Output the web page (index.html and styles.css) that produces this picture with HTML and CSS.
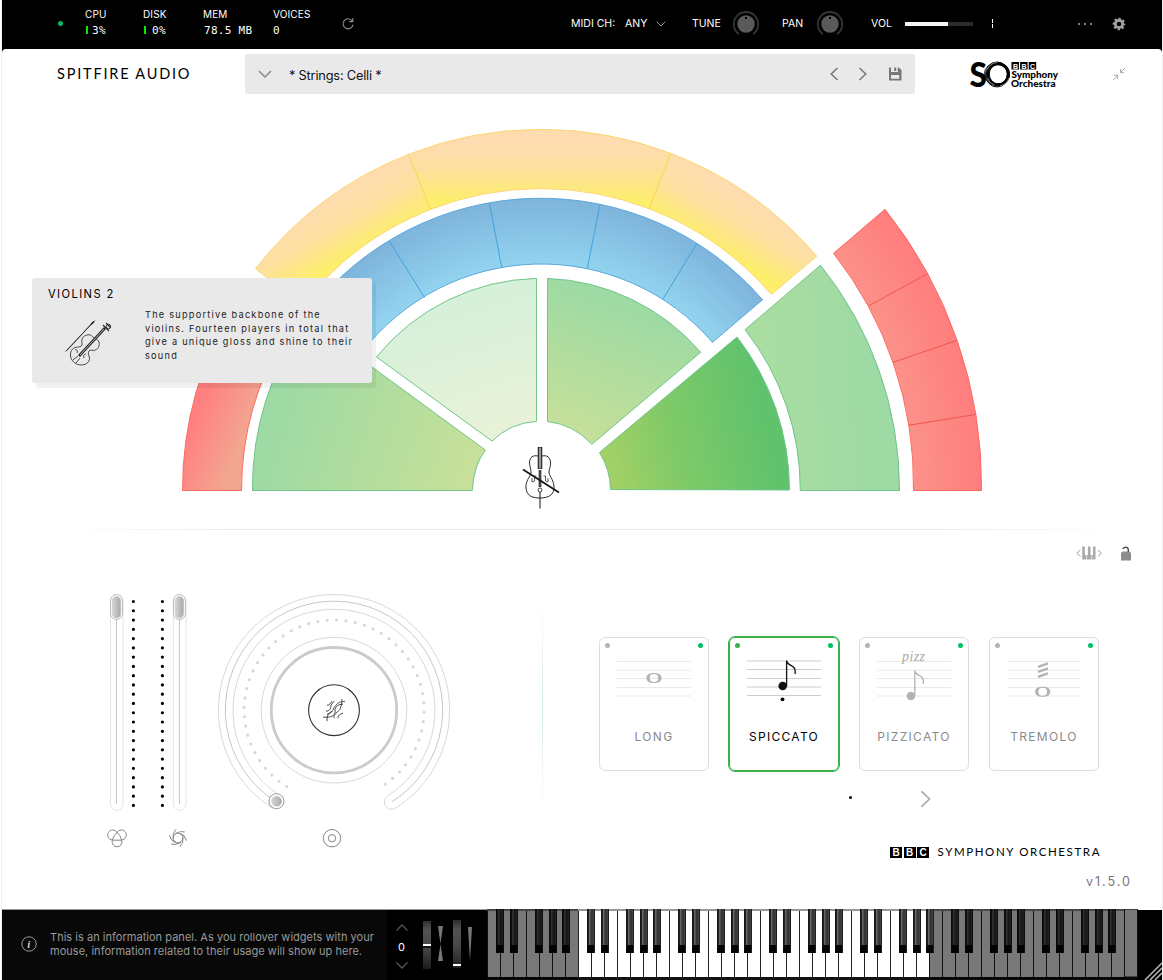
FILE: index.html
```html
<!DOCTYPE html>
<html lang="en">
<head>
<meta charset="utf-8">
<title>BBC Symphony Orchestra</title>
<link rel="stylesheet" href="styles.css">
</head>
<body>
<div class="app">
  <header class="topbar">
    <span class="status"></span>
    <div class="stat cpu"><span>CPU</span><b class="mono"><i class="meter"></i>3%</b></div>
    <div class="stat disk"><span>DISK</span><b class="mono"><i class="meter"></i>0%</b></div>
    <div class="stat mem"><span>MEM</span><b class="mono">78.5 MB</b></div>
    <div class="stat voices"><span>VOICES</span><b class="mono">0</b></div>
    <svg class="reload" width="14" height="14" viewBox="0 0 14 14"><path d="M11.2 4A5 5 0 1 0 12 7.600M11.800 1v3.600H8.200" fill="none" stroke="#8c8c8c" stroke-width="1.100"/></svg>
    <span class="lbl midi">MIDI CH:</span>
    <span class="lbl any">ANY</span>
    <svg width="10" height="6" viewBox="0 0 10 6"><path d="M.7.7 5 5 9.300.7" fill="none" stroke="#999"/></svg>
    <span class="lbl tune">TUNE</span>
    <svg class="knob" width="28" height="28" viewBox="-14 -14 28 28"><g id="knob"><path d="M-7 10.200A12.200 12.200 0 1 1 7 10.200" fill="none" stroke="#333" stroke-width="1.900"/><circle r="8.700" fill="#5a5a5a"/><rect x="-1" y="-7" width="2" height="2" fill="#000"/></g></svg>
    <span class="lbl pan">PAN</span>
    <svg class="knob" width="28" height="28" viewBox="-14 -14 28 28"><use href="#knob"/></svg>
    <span class="lbl vol">VOL</span>
    <span class="volbar"><i></i></span>
    <span class="tick"></span>
    <svg class="more" width="16" height="4" viewBox="-1 0 16 4"><g fill="#aaa"><circle cx="2" cy="2" r="1"/><circle cx="8" cy="2" r="1"/><circle cx="14" cy="2" r="1"/></g></svg>
    <svg class="more" width="14" height="14" viewBox="-7 -7 14 14"><circle r="3.700" fill="none" stroke="#a3a3a3" stroke-width="2.800"/><circle r="5.500" fill="none" stroke="#a3a3a3" stroke-width="1.700" stroke-dasharray="2.3 2.02" stroke-dashoffset="1.150"/></svg>
  </header>

  <main class="body">
  <div class="head">
    <span class="brand">SPITFIRE AUDIO</span>
    <div class="preset">
      <svg width="14" height="9" viewBox="0 0 14 9"><path d="M1 1l6 6 6-6" fill="none" stroke="#888" stroke-width="1.500"/></svg>
      <span class="pname">* Strings: Celli *</span>
      <svg width="10" height="14" viewBox="0 0 10 14"><path d="M8.500 1 2.200 7l6.300 6" fill="none" stroke="#777" stroke-width="1.500"/></svg>
      <svg class="next" width="10" height="14" viewBox="0 0 10 14"><path d="M1.500 1l6.300 6-6.300 6" fill="none" stroke="#777" stroke-width="1.500"/></svg>
      <svg width="14" height="14" viewBox="0 0 14 14"><path fill-rule="evenodd" d="M1 .5h9.700L13.500 3v10.500H1zM3 .5V5h6.800V.5zM3 8v3.800h8.200V8z" fill="#777"/><path d="M6.200.5h2V4h-2z" fill="#777"/></svg>
    </div>
    <svg class="sologo" width="94" height="48" viewBox="966 50 94 48">
      <text x="969.500" y="87" class="big-s" textLength="17.500" lengthAdjust="spacingAndGlyphs">S</text>
      <g fill="none" stroke="#000"><ellipse cx="998" cy="74.300" rx="10.500" ry="10.500" stroke-width="3"/><ellipse cx="998.300" cy="74" rx="9" ry="10" stroke-width="1"/><ellipse cx="997" cy="74.500" rx="11.500" ry="12.500" stroke-width="1"/><ellipse cx="996.800" cy="74" rx="12.500" ry="11.500" stroke-width=".8"/></g>
      <g stroke="#fff" stroke-width=".5" fill="none"><path d="M987 70a12 12 0 0 1 10-7.500M1009 78a12 12 0 0 1-9 8M987.500 78a11 11 0 0 0 7 7"/></g>
      <path d="M1011.500 62h7.500v7.500h-7.500zM1020.100 62h7.500v7.500h-7.500zM1028.700 62h7.500v7.500h-7.500z"/>
      <g class="bbc-s"><text x="1013" y="68.500">B</text><text x="1021.600" y="68.500">B</text><text x="1030" y="68.500">C</text></g>
      <text class="so-t" x="1011.500" y="78" textLength="46.500" lengthAdjust="spacingAndGlyphs">Symphony</text>
      <text class="so-t" x="1011" y="87" textLength="44.500" lengthAdjust="spacingAndGlyphs">Orchestra</text>
    </svg>
    <svg class="shrink" width="14" height="14" viewBox="0 0 14 14"><path d="M13 1 8.500 5.500M8.500 2v3.700H12M1 13l4.500-4.500M2 8.300h3.600V12" fill="none" stroke="#aaa" stroke-width="1"/></svg>
  </div>

  <section class="stage">
    <svg width="1160" height="425" viewBox="2 100 1160 425">
      <defs>
        <linearGradient id="yel" gradientUnits="userSpaceOnUse" x1="0" y1="128" x2="0" y2="209"><stop offset=".2" stop-color="#fedcaf"/><stop offset=".5" stop-color="#fde09e"/><stop offset=".9" stop-color="#fdee6c"/></linearGradient>
        <linearGradient id="yell" gradientUnits="userSpaceOnUse" x1="325" y1="200" x2="363" y2="266"><stop offset=".05" stop-color="#fedcaf"/><stop offset=".4" stop-color="#fde09e"/><stop offset=".8" stop-color="#fdee6c"/></linearGradient>
        <linearGradient id="yelr" gradientUnits="userSpaceOnUse" x1="755" y1="200" x2="717" y2="266"><stop offset=".05" stop-color="#fedcaf"/><stop offset=".4" stop-color="#fde09e"/><stop offset=".8" stop-color="#fdee6c"/></linearGradient>
        <radialGradient id="blu" gradientUnits="userSpaceOnUse" cx="541" cy="491" r="293"><stop offset=".77" stop-color="#93d4f0"/><stop offset="1" stop-color="#7eb4db"/></radialGradient>
        <radialGradient id="red" gradientUnits="userSpaceOnUse" cx="541" cy="491" r="443"><stop offset=".84" stop-color="#fb928a"/><stop offset="1" stop-color="#ff7d7d"/></radialGradient>
        <linearGradient id="redl" gradientUnits="userSpaceOnUse" x1="188" y1="420" x2="242" y2="442"><stop offset=".1" stop-color="#ff8080"/><stop offset="1" stop-color="#f2a691"/></linearGradient>
        <linearGradient id="g1" x1="0" y1=".4" x2="1" y2=".65"><stop offset=".15" stop-color="#9edaa3"/><stop offset="1" stop-color="#c7e099"/></linearGradient>
        <linearGradient id="g2" x1=".4" y1="0" x2=".7" y2="1"><stop offset=".2" stop-color="#d7f0da"/><stop offset="1" stop-color="#e9f2d8"/></linearGradient>
        <linearGradient id="g3" x1=".6" y1=".1" x2=".3" y2="1"><stop offset=".1" stop-color="#9edaa3"/><stop offset="1" stop-color="#c7e099"/></linearGradient>
        <linearGradient id="g4" x1="0" y1=".8" x2="1" y2=".6"><stop offset="0" stop-color="#a6d164"/><stop offset=".4" stop-color="#7fca68"/><stop offset=".9" stop-color="#5fc26c"/></linearGradient>
        <linearGradient id="g5" x1="0" y1=".5" x2="1" y2=".4"><stop offset=".1" stop-color="#aadda1"/><stop offset=".8" stop-color="#9edaa4"/></linearGradient>
      </defs>
      <g stroke="#fbd873">
        <path fill="url(#yell)" d="M255.500 268.700A362.500 362.500 0 0 1 408.700 154.300L430.300 209.500A302 302 0 0 0 302.600 305Z"/>
        <path fill="url(#yelr)" d="M670.600 153.300A362.500 362.500 0 0 1 816.800 256.200L771.300 294.500A302 302 0 0 0 649 208.700Z"/>
        <path fill="url(#yel)" d="M408.700 154.300A362.500 362.500 0 0 1 670.600 153.300L649 208.700A302 302 0 0 0 430.300 209.500Z"/>
      </g>
      <path fill="none" stroke="#ffd95c" d="M408.700 154.300 430.300 209.500M670.600 153.300 649 208.700"/>
      <path fill="url(#blu)" stroke="#5aa8db" d="M309 312A293 293 0 0 1 762.500 299.700L712.500 342.300A226.500 226.500 0 0 0 362 352Z"/>
      <path fill="none" stroke="#40a4dc" d="M389.500 241.500 424.500 297.500M489.500 203.500 501.800 268M599.900 204.700 587.300 268.500M696.700 243.700 663 299"/>
      <g stroke="#6fc58a">
        <path fill="url(#g1)" d="M252.500 490.500A289.500 289.500 0 0 1 306.500 319L485.300 450Q473.500 466 472.300 490.500Z"/>
        <path fill="url(#g2)" d="M376.500 357A213 213 0 0 1 536.500 278.400V421.300A70 70 0 0 0 492 441Z"/>
        <path fill="url(#g3)" d="M547.500 278.400A213 213 0 0 1 700.700 352.300L591.800 444.300A70 70 0 0 0 547.500 421.500Z"/>
        <path fill="url(#g4)" d="M737 337A249 249 0 0 1 789.500 490L610.500 489.500A70 70 0 0 0 599.500 452.500Z"/>
        <path fill="url(#g5)" d="M820.500 265.200A359 359 0 0 1 899.500 490.500H800.300A259 259 0 0 0 745 329.700Z"/>
      </g>
      <g stroke="#fc6a62">
        <path fill="url(#redl)" d="M182.500 490.500A359 359 0 0 1 235 303L286 334A299 299 0 0 0 241.500 490.500Z"/>
        <path fill="url(#red)" d="M885 209.300A443 443 0 0 1 981.500 490.500H913.500A374 374 0 0 0 833.500 253.300Z"/>
      </g>
      <path fill="none" stroke="#f2564a" d="M868.500 306 927.500 273.700M893.300 362.300 956.500 340.500M908.700 425.300 975.500 414.500"/>
      <g fill="none" stroke="#111">
        <path d="M538 456c-5-1-8 1-8.500 6 0 5 2 8 1.500 11-1 4-4 6-5 12-.5 8 3 13 13.500 13s15-4 14.500-12c-1-7-4-9-5-13-.5-3 2-6 1.500-11-.5-5-3.500-7-8.500-6" stroke-width=".9"/>
        <path d="M532 478v4l2.500-1v-5h2M548 478v4l-2.500-1v-5h-2" stroke-width=".7"/>
        <path d="M540 447v22" stroke-width="4.500"/><path d="M540 447.500v21" stroke="#999" stroke-width="2.500"/>
        <path d="M540 470v17" stroke-width="2.600"/><path d="M540 470v17" stroke-width="1" stroke="#777"/><path d="M540 492v16.500" stroke-width="1"/>
        <path d="M523 469.500l36 23" stroke-width="1.600"/><circle cx="540" cy="490" r="2" fill="#fff" stroke-width=".8"/>
      </g>
    </svg>
    <div class="tooltip">
      <h2>VIOLINS 2</h2>
      <svg width="52" height="50" viewBox="62 316 52 50" fill="none" stroke="#222">
        <path d="M65.500 351.500 95 320.500M67 350.500 93 322" stroke-width=".8"/><path d="M91 324.500l3-3" stroke-width="1.600"/>
        <path d="M82 343c-1-4 1-7 5-8 3-1 5 1 7 3M94 338c4 1 6 4 5 8-1 4-5 5-9 4-2 1-2 4-1 6 2 5-2 9-8 9-5 0-10-4-10.500-9-.5-6 3-9 8-9 2 0 4-1 3.500-4" stroke-width=".8"/>
        <path d="M79 356l26-28" stroke-width="2.600"/><path d="M80 355l24-26" stroke="#bbb" stroke-width="1"/>
        <path d="M103 325l6 6M106 323l4.500 4.500" stroke-width="1.100"/><circle cx="108.500" cy="326.500" r="2.200" stroke-width=".9"/>
        <path d="M75 350c2-1 3 1 2 3M86 354c-2 0-3 2-2 4M73 360l5-4M76 363l4-5" stroke-width=".8"/>
      </svg>
      <p>The supportive backbone of the<br>violins. Fourteen players in total that<br>give a unique gloss and shine to their<br>sound</p>
    </div>
  </section>

  <div class="rule"></div>

  <section class="controls">
    <div class="left">
      <svg width="362" height="280" viewBox="98 580 362 280">
        <defs><linearGradient id="hd"><stop offset="0" stop-color="#d6d6d6"/><stop offset="1" stop-color="#a9a9a9"/></linearGradient>
        <g id="slider" fill="#fff"><rect x="110.500" y="594.700" width="12.600" height="215.600" rx="6.300" stroke="#e6e6e6"/><path d="M116.500 619v185" stroke="#c8c8c8"/><rect x="110.500" y="594.500" width="12" height="25" rx="6" stroke="#bbb"/><rect x="112.300" y="596.500" width="8.400" height="21.500" rx="4.200" fill="url(#hd)" stroke="#bbb" stroke-width=".5"/></g></defs>
        <use href="#slider"/><use href="#slider" x="62.900"/>
        <g stroke="#000" stroke-width="3.200" stroke-linecap="round"><path d="M133.400 601.500V806" stroke-dasharray="0 9.270"/><path d="M162.400 601.500V806" stroke-dasharray="0 9.270"/></g>
        <g transform="translate(334 710.200)" fill="none">
          <path d="M-61.700 97.900A115.700 115.700 0 1 1 61.700 97.900A7.350 7.350 0 0 1 53.800 85.500A101 101 0 1 0 -53.800 85.500A7.350 7.350 0 0 0 -61.700 97.900Z" stroke="#d9d9d9"/>
          <path d="M-57.800 91.700A108.700 108.700 0 1 1 57.800 91.700" stroke="#c6c6c6"/>
          <path d="M-47.300 76.300A90 90 0 1 1 50.900 74.100" pathLength="49.050" stroke-dasharray="0 1" stroke="#d8d8d8" stroke-width="3.200" stroke-linecap="round"/>
          <circle r="72.800" stroke="#d9d9d9"/><circle r="62.700" stroke="#cbcbcb" stroke-width="2.800"/>
          <circle r="25.400" stroke="#333" stroke-width="1.100"/>
          <g stroke="#333" stroke-width=".9"><path d="M-8 1c3 0 5-2 5-6l3-4M-7 4c7-1 5-6 10-10 3-3 4-2 8-3M-11 7h3c7 0 10-3 9-7 0-4 4-6 8-6M0 8c-1-4 4-6 6-9 1-3 2-5 2-10M-7 11c0-7 2-8 5-10M4 8c0-3 2-4 5-5M-7-5c2 0 3-1 5-4"/></g>
          <circle cx="-57.500" cy="91" r="7.500" fill="#fff" stroke="#999"/><circle cx="-57.500" cy="91" r="5.300" fill="url(#hd)"/>
        </g>
        <g fill="none" stroke="#777" stroke-width=".9">
          <path d="M112.400 840A5 5 0 1 1 117 832.500A5 5 0 1 1 121.600 840"/><path d="M112.300 840.500A4.900 4.900 0 1 0 121.700 840.500"/><path d="M112.400 840.200h9.200Q120.500 835 117 832.500 113.500 835 112.400 840.200Z"/>
          <g transform="translate(178 838)"><circle r="4.900"/><path id="bl" d="M-4.800.5Q-6-4.500-1.900-8.700"/><use href="#bl" transform="rotate(60)"/><use href="#bl" transform="rotate(120)"/><use href="#bl" transform="rotate(180)"/><use href="#bl" transform="rotate(240)"/><use href="#bl" transform="rotate(300)"/></g>
          <circle cx="332" cy="838.200" r="8.700"/><circle cx="332" cy="838.200" r="3.700"/>
        </g>
      </svg>
    </div>
    <div class="vrule"></div>
    <div class="right">
      <div class="tools">
        <svg width="26" height="14" viewBox="0 0 26 14"><path d="M4.300 4 1 7.200l3.300 3.300M22 4l3.300 3.200L22 10.500" fill="none" stroke="#999"/><path d="M6.200.5h2.600V9h1.600v4.500H6.200zM11 9h.9V.5h2.600V9h1v4.500H11zM16.200 9h.8V.5h2.500v13h-3.300z" fill="#aaa"/></svg>
        <svg width="12" height="15" viewBox="0 0 12 15"><path d="M1 7l1.500-1.500h7L11 7v7.500H1z" fill="#8d8d8d"/><path d="M3 3.200C3.500.8 8.300.4 8.300 3.500V6" fill="none" stroke="#555" stroke-width="1.500"/></svg>
      </div>
      <div class="cards">
        <article class="card"><i class="l"></i><i class="r"></i>
          <svg width="76" height="64" viewBox="616 646 76 64"><g id="staff" stroke="#e9e9e9"><path d="M617 661.500h74M617 670.200h74M617 678.500h74M617 687.500h74M617 696h74"/></g><path id="whole" fill-rule="evenodd" d="M654 673c5 0 7.500 1.800 7.500 5s-2.500 5-7.500 5-7.500-1.800-7.500-5 2.500-5 7.500-5zM654 674c-3.200 0-4.300 1.200-4.300 4s1.100 4 4.300 4 4.300-1.200 4.300-4-1.100-4-4.300-4z" fill="#b3b3b3"/></svg>
          <span>LONG</span></article>
        <article class="card on"><i class="l"></i><i class="r"></i>
          <svg width="76" height="64" viewBox="616 646 76 64"><path stroke="#cdcdcd" d="M617 661h74M617 669.500h74M617 678.500h74M617 687h74M617 695.500h74"/><g id="note"><circle cx="652.700" cy="686" r="4.300" fill="currentColor"/><path d="M656.600 660.500V686M656.600 661c1 5 8.500 4 8.500 9.500v3.500" fill="none" stroke="currentColor" stroke-width="1.300"/></g><circle cx="652.500" cy="699.300" r="1.900"/></svg>
          <span>SPICCATO</span></article>
        <article class="card"><i class="l"></i><i class="r"></i>
          <svg class="dim" width="76" height="64" viewBox="616 646 76 64"><use href="#staff"/><use href="#note" x="-1.800" y="10"/><text x="642" y="661" class="pizz" textLength="23">pizz</text></svg>
          <span>PIZZICATO</span></article>
        <article class="card"><i class="l"></i><i class="r"></i>
          <svg class="dim" width="76" height="64" viewBox="616 646 76 64"><use href="#staff"/><use href="#whole" x="-1.300" y="13.700"/><path d="M648 666.800l10-3.500M648 671.800l10-3.500M648 676.800l10-3.500" stroke="#b3b3b3" stroke-width="2.300"/></svg>
          <span>TREMOLO</span></article>
      </div>
      <div class="pager"><i></i><svg width="12" height="18" viewBox="0 0 12 18"><path d="M1.500 1.300 9.500 9l-8 7.700" fill="none" stroke="#aaa" stroke-width="1.700"/></svg></div>
      <div class="bbc"><b>B</b><b>B</b><b>C</b><span>SYMPHONY ORCHESTRA</span></div>
      <div class="ver">v1.5.0</div>
    </div>
  </section>
  </main>

  <footer class="foot">
    <div class="info">
      <svg width="16" height="16" viewBox="0 0 16 16"><circle cx="8" cy="8" r="7.200" fill="none" stroke="#aaa" stroke-width=".9"/><text x="6.200" y="12" class="ii">i</text></svg>
      <p>This is an information panel. As you rollover widgets with your<br>mouse, information related to their usage will show up here.</p>
    </div>
    <div class="oct">
      <svg width="12" height="7" viewBox="0 0 12 7"><path d="M.5 6.500 6 1l5.500 5.500" fill="none" stroke="#555" stroke-width="1.300"/></svg>
      <span>0</span>
      <svg width="12" height="7" viewBox="0 0 12 7"><path d="M.5.500 6 6 11.500.500" fill="none" stroke="#555" stroke-width="1.300"/></svg>
    </div>
    <svg width="64" height="70" viewBox="415 910 64 70">
      <defs><linearGradient id="wh" x2="0" y2="1"><stop offset="0" stop-color="#2c2c2c"/><stop offset=".2" stop-color="#525252"/><stop offset=".55" stop-color="#474747"/><stop offset="1" stop-color="#1c1c1c"/></linearGradient></defs>
      <path fill="url(#wh)" d="M423 921h8v48h-8zM453 920h8v48h-8z"/>
      <path fill="#fff" d="M423 944h8v2h-8zM453 964h8v2h-8z"/><path d="M423 946h8v2h-8z" fill="#111"/>
      <path fill="#777" d="M438 926h5l-2.500 18zM438 961h5l-2.500-17zM468 927h4l-2 34z"/>
    </svg>
    <svg class="keys" width="675" height="71" viewBox="487 909 675 71">
      <defs>
        <linearGradient id="bkg"><stop offset="0" stop-color="#111"/><stop offset=".2" stop-color="#222"/><stop offset=".3" stop-color="#666"/><stop offset=".5" stop-color="#444"/><stop offset=".65" stop-color="#222"/><stop offset=".75" stop-color="#555"/><stop offset="1" stop-color="#0a0a0a"/></linearGradient>
        <g id="bk"><path d="M0 0h8v44H0z" fill="url(#bkg)"/><path d="M1 36h6v8H0v-3z" fill="#050505"/></g>
        <g id="octave"><path d="M0 0h91v68H0z" fill="#fff"/><path d="M.5 0v68M13.500 0v68M26.500 0v68M39.500 0v68M52.500 0v68M65.500 0v68M78.500 0v68" stroke="#222"/><path d="M0 .5h91M0 1.500h91" stroke="#999"/><use href="#bk" x="9"/><use href="#bk" x="23"/><use href="#bk" x="48"/><use href="#bk" x="62"/><use href="#bk" x="75"/></g>
      </defs>
      <path d="M487 909h651v71h-651z" fill="#111"/>
      <g transform="translate(487 909)">
        <use href="#octave"/><use href="#octave" x="91"/><use href="#octave" x="182"/><use href="#octave" x="273"/><use href="#octave" x="364"/><use href="#octave" x="455"/><use href="#octave" x="546"/>
        <path d="M637.500 0h13v68h-13z" fill="#fff" stroke="#222"/>
        <path d="M0 0h91v71H0zM442 0h209v71H442z" fill="#000" fill-opacity=".53"/>
        <use href="#bk" x="439"/>
      </g>
      <path d="M1138 909h24v1h-24z" fill="#fff"/>
      <path d="M1145 980l17-17M1150 980l12-12M1155 980l7-7" stroke="#bbb" stroke-width="1.500"/>
    </svg>
  </footer>
</div>
</body>
</html>
```
FILE: styles.css
```css
* { box-sizing: border-box; }
body { margin: 0; background: #fff; font-family: Inter, "Liberation Sans", sans-serif; width: 1163px; height: 980px; overflow: hidden; }
svg { display: block; }
p, h2 { margin: 0; font-weight: 400; }
.app { width: 1160px; height: 980px; margin-left: 2px; position: relative; display: flex; flex-direction: column; background: linear-gradient(#000 60px, #fff 60px); box-shadow: 0 0 0 1px #f0f0f0; }

.topbar { height: 49px; display: grid; align-items: center; color: #fff; flex: none; padding-bottom: 2px;
  grid-template-columns: 83px 58px 60px 70px 68px 230px 54px 31px 36px 40px 50px 34px 55px 34px 86px 85px 36px 1fr; }
.status { width: 5px; height: 5px; border-radius: 50%; background: #00b866; margin-left: 56px; }
.stat { display: flex; flex-direction: column; font-size: 10px; line-height: 16px; letter-spacing: .15px; padding-bottom: 1px; }
.stat > span { margin-top: -1px; }
.mono { font: 11px/16px "DejaVu Sans Mono", monospace; letter-spacing: .3px; white-space: pre; display: flex; align-items: center; margin-top: 1px; }
.mem .mono { padding-left: 1px; }
.meter { width: 2px; height: 8px; background: #00f000; margin: -2px 4px 0 1px; }
.disk .meter { margin-right: 6px; }
.lbl { font-size: 10.5px; line-height: 14px; white-space: nowrap; }
.any, .tune, .pan { padding-top: 1px; }
.volbar { width: 68px; height: 4px; background: #2a2c2e; }
.volbar i { display: block; width: 43px; height: 4px; background: #f2f5f7; }
.tick { width: 1px; height: 9px; background: linear-gradient(#fff 4px, #000 4px, #000 5px, #fff 5px); margin-left: 1px; }

.body { flex: none; height: 861px; background: #fff; border-radius: 4px 4px 0 0; border-bottom: 1px solid #999; }
.head { height: 51px; padding-bottom: 1px; display: grid; grid-template-columns: 243px 725px 142px 1fr; align-items: center; }
.brand { font: 14.5px/20px Lato, sans-serif; letter-spacing: 1.8px; padding-left: 55px; }
.preset { width: 670px; height: 40px; background: #e9e9e9; border-radius: 2px; display: grid; grid-template-columns: 30px 541px 29px 30px 1fr; align-items: center; padding-left: 13px; }
.pname { font-size: 12.8px; letter-spacing: -.2px; color: #111; padding: 2px 0 0 1px; }
.big-s { font: 900 35px Lato, sans-serif; }
.so-t { font: 900 9px Lato, sans-serif; }
.bbc-s { font: 700 7px "Liberation Sans", sans-serif; fill: #fff; }
.sologo { margin-left: -4px; }

.stage { height: 429px; position: relative; }
.tooltip { position: absolute; left: 30px; top: 178px; width: 340px; height: 105px; background: #e9e9e9; border-radius: 3px; box-shadow: 4px 5px 0 rgba(0,0,0,.06); display: grid; grid-template-columns: 81px 1fr; column-gap: 16px; grid-template-rows: 30px 1fr; padding-left: 16px; }
.tooltip h2 { grid-column: 1 / 3; font-size: 11.2px; line-height: 14px; letter-spacing: 1.4px; padding-top: 9px; }
.tooltip svg { margin: 8px 0 0 14px; }
.tooltip p { font-size: 9.2px; line-height: 13.7px; letter-spacing: 1.23px; color: #222; white-space: nowrap; }
.rule { height: 1px; background: linear-gradient(90deg, #fff 5%, #ebebeb 20%, #ebebeb 80%, #fff 97%); }

.controls { height: 378px; display: grid; grid-template-columns: 540px 1px 1fr; }
.left { padding: 50px 0 0 96px; }
.vrule { height: 222px; margin-top: 65px; background: linear-gradient(#fff, #d5e9ee 50%, #fff); }
.tools { display: flex; gap: 18px; padding: 16px 0 0 533px; height: 107px; }
.cards { display: flex; gap: 20px; padding-left: 56px; }
.card { width: 110px; height: 134px; border: 1px solid #ddd; border-radius: 6px; display: grid; grid-template-columns: 1fr 1fr; grid-template-rows: 72px 1fr; position: relative; color: #b3b3b3; }
.card i { width: 5px; height: 5px; border-radius: 50%; background: #00c060; position: absolute; top: 5px; right: 5px; }
.card i.l { left: 5px; background: #b3b3b3; }
.card svg { grid-column: 1 / 3; margin: 8px 0 0 16px; }
.card span { grid-column: 1 / 3; text-align: center; font-size: 12px; line-height: 16px; letter-spacing: 1.3px; color: #8a8a8a; padding-top: 19px; }
.card.on { outline: 1px solid #39b04c; border-color: #39b04c; color: #111; outline-offset: -.5px; }
.card.on i.l { background: #39b04c; }
.card.on span { color: #000; }
.pizz { font: italic 14px "Liberation Serif", serif; fill: #aaa; }
.pager { display: flex; align-items: center; gap: 68px; padding: 19px 0 0 306px; height: 37px; }
.pager i { width: 3px; height: 3px; border-radius: 50%; background: #000; margin-top: -4px; }
.bbc { display: flex; gap: 1.5px; padding-left: 347px; margin-top: 38px; height: 12px; align-items: center; }
.bbc b { width: 12px; height: 11px; background: #000; color: #fff; font: 700 10px/11px "Liberation Sans", sans-serif; text-align: center; }
.bbc span { font: 11.5px/12px Lato, sans-serif; letter-spacing: 1.6px; margin-left: 7px; white-space: nowrap; }
.ver { font-size: 12.5px; line-height: 16px; letter-spacing: 2px; color: #777; padding-left: 543px; margin-top: 16px; }

.foot { height: 71px; margin-top: -1px; display: flex; position: relative; background: linear-gradient(#999 1px, #000 1px); }
.info { width: 385px; height: 70px; margin-top: 1px; background: #080808; display: flex; padding: 20px 0 0 19px; gap: 13px; color: #999; }
.info svg { margin-top: 6px; }
.info p { font-size: 11px; line-height: 14px; letter-spacing: .03px; white-space: nowrap; }
.ii { font: italic 700 11px "Liberation Serif", serif; fill: #ccc; }
.oct { width: 28px; display: flex; flex-direction: column; align-items: center; padding: 15px 0 0 1px; gap: 8.5px; color: #fff; font-size: 11px; line-height: 14px; }
.foot > svg { margin-top: 1px; }
.foot .keys { margin: 0 0 0 8px; }
```
